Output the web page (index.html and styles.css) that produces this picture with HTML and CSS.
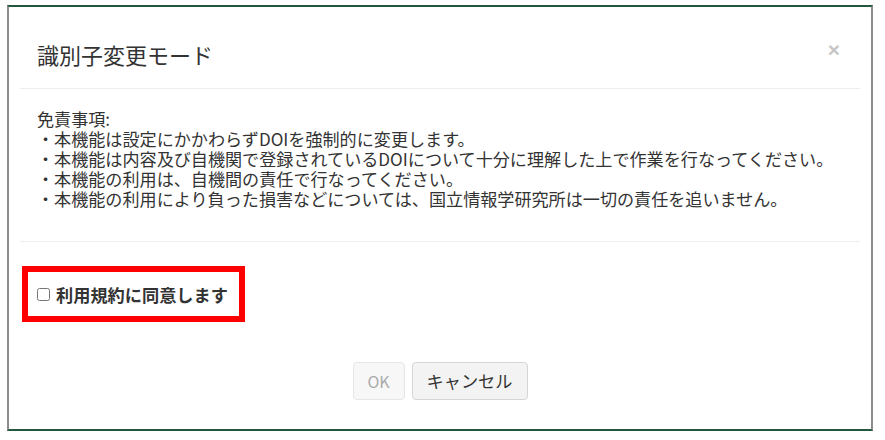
FILE: index.html
```html
<!DOCTYPE html>
<html lang="ja">
<head>
  <meta charset="UTF-8" />
  <title>識別子変更モード</title>
  <link rel="stylesheet" href="styles.css">
</head>
<body>
  <div class="frame">
    <div class="modal">
      <div class="modal-header">
        <h4 class="modal-title">識別子変更モード</h4>
        <button class="close" type="button">×</button>
      </div>

      <div class="modal-body">
        <p>免責事項:</p>
        <p>・本機能は設定にかかわらずDOIを強制的に変更します。</p>
        <p>・本機能は内容及び自機関で登録されているDOIについて十分に理解した上で作業を行なってください。</p>
        <p>・本機能の利用は、自機間の責任で行なってください。</p>
        <p>・本機能の利用により負った損害などについては、国立情報学研究所は一切の責任を追いません。</p>
      </div>

      <div class="modal-agree">
        <label class="agree-box">
          <input type="checkbox" id="agree" />
          <span>利用規約に同意します</span>
        </label>
      </div>

      <div class="modal-footer">
        <button class="btn btn-ok" type="button" disabled>OK</button>
        <button class="btn btn-cancel" type="button">キャンセル</button>
      </div>
    </div>
  </div>
</body>
</html>
```

FILE: styles.css
```css
* {
  box-sizing: border-box;
}

body {
  margin: 0;
  background: #fff;
  font-family: "Noto Sans CJK JP", "Noto Sans", sans-serif;
  color: #333;
}

.frame {
  margin: 5px 0 0 7px;
  width: 866px;
  height: 426px;
  border-top: 2px solid #24573b;
  border-bottom: 2px solid #24573b;
  border-left: 2px solid #8c8c8c;
  border-right: 2px solid #8c8c8c;
  background: #fff;
}

.modal {
  margin: 0 11px;
}

.modal-header {
  display: flex;
  justify-content: space-between;
  align-items: center;
  padding: 33px 20px 21px 17px;
  border-bottom: 1px solid #eeeeee;
}

.modal-title {
  margin: 0;
  font-size: 22px;
  line-height: 26px;
  font-weight: normal;
  color: #333;
}

.close {
  border: none;
  background: none;
  padding: 0;
  margin-bottom: 7px;
  font-family: "Liberation Sans", sans-serif;
  font-size: 21px;
  line-height: 20px;
  font-weight: bold;
  color: #c6c6c6;
  cursor: pointer;
}

.modal-body {
  padding: 20px 17px 32px;
  border-bottom: 1px solid #eeeeee;
  font-size: 17.1px;
  line-height: 20px;
}

.modal-body p {
  margin: 0;
  white-space: nowrap;
}

.modal-agree {
  padding: 24px 0 0 2px;
}

.agree-box {
  display: inline-flex;
  align-items: center;
  gap: 6px;
  width: 223px;
  height: 56px;
  padding: 0 6px 0 9px;
  border: 6px solid #ff0000;
  font-size: 17.2px;
  font-weight: bold;
  color: #333;
}

.agree-box input {
  margin: 0;
  width: 13px;
  height: 13px;
}

.modal-footer {
  display: flex;
  justify-content: center;
  gap: 7px;
  padding-top: 40px;
}

.btn {
  height: 38px;
  padding: 0 14px;
  border-radius: 4px;
  font-family: "Noto Sans CJK JP", "Noto Sans", sans-serif;
  line-height: 36px;
  cursor: pointer;
}

.btn-ok {
  width: 52px;
  background: #f7f7f7;
  border: 1px solid #e6e6e6;
  color: #aaaaaa;
  font-size: 16px;
  cursor: default;
}

.btn-cancel {
  width: 116px;
  background: #f3f3f3;
  border: 1px solid #d6d6d6;
  color: #333;
  font-size: 17.2px;
}
```
